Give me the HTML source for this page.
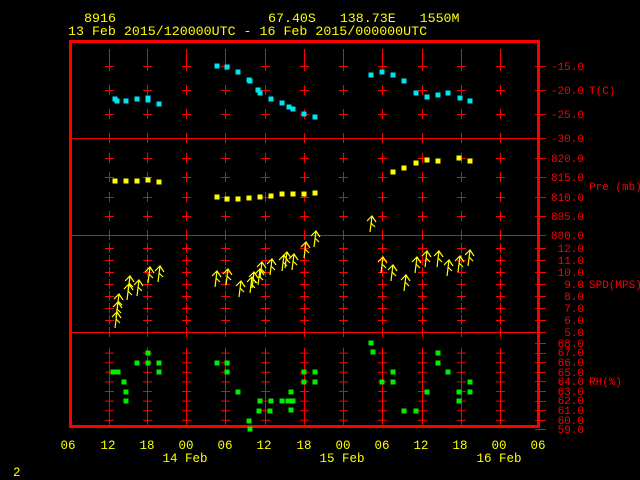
<!DOCTYPE html>
<html><head><meta charset="utf-8"><style>
html,body{margin:0;padding:0;background:#000;width:640px;height:480px;overflow:hidden}
svg{display:block}
text{font-family:"Liberation Mono",monospace;white-space:pre}
</style></head><body>
<svg id="s" width="640" height="480" xmlns="http://www.w3.org/2000/svg" xml:space="preserve">
<g fill="#ffff00" font-size="13.3">
<text x="84" y="22">8916</text>
<text x="268" y="22">67.40S   138.73E   1550M</text>
<text x="68" y="35">13 Feb 2015/120000UTC - 16 Feb 2015/000000UTC</text>
</g>
<g id="grid" stroke="#ff0000" stroke-width="1" fill="none"></g>
<rect x="70.5" y="41.5" width="468" height="385" fill="none" stroke="#ff0000" stroke-width="3"/>
<g fill="#ff0000" font-size="11" text-anchor="end">
<text x="584" y="70">-15.0</text><text x="584" y="94">-20.0</text><text x="584" y="118">-25.0</text><text x="584" y="142">-30.0</text>
<text x="584" y="162">820.0</text><text x="584" y="181">815.0</text><text x="584" y="201">810.0</text><text x="584" y="220">805.0</text><text x="584" y="239">800.0</text>
<text x="584" y="252">12.0</text><text x="584" y="264">11.0</text><text x="584" y="276">10.0</text><text x="584" y="288">9.0</text><text x="584" y="300">8.0</text><text x="584" y="312">7.0</text><text x="584" y="324">6.0</text><text x="584" y="336">5.0</text>
<text x="584" y="347">68.0</text><text x="584" y="356">67.0</text><text x="584" y="366">66.0</text><text x="584" y="376">65.0</text><text x="584" y="385">64.0</text><text x="584" y="395">63.0</text><text x="584" y="404">62.0</text><text x="584" y="414">61.0</text><text x="584" y="424">60.0</text><text x="584" y="433">59.0</text>
</g>
<g fill="#ff0000" font-size="11">
<text x="589" y="94">T(C)</text><text x="589" y="190">Pre (mb)</text><text x="589" y="288">SPD(MPS)</text><text x="589" y="385">RH(%)</text>
</g>
<g fill="#ffff00" font-size="12.5" text-anchor="middle">
<text x="68" y="449">06</text><text x="108" y="449">12</text><text x="147" y="449">18</text><text x="186" y="449">00</text><text x="225" y="449">06</text><text x="264" y="449">12</text><text x="304" y="449">18</text><text x="343" y="449">00</text><text x="382" y="449">06</text><text x="421" y="449">12</text><text x="460" y="449">18</text><text x="499" y="449">00</text><text x="538" y="449">06</text>
<text x="185" y="462">14 Feb</text><text x="342" y="462">15 Feb</text><text x="499" y="462">16 Feb</text>
</g>
<text x="13" y="476" fill="#ffff00" font-size="12.5">2</text>
<g id="data"></g>
</svg>
<script>
var NS="http://www.w3.org/2000/svg";
function el(p,t,a){var e=document.createElementNS(NS,t);for(var k in a)e.setAttribute(k,a[k]);p.appendChild(e);return e;}
var g=document.getElementById('grid'),d=document.getElementById('data');
var xs=[109,147,186,225,265,304,343,382,422,461,500];
var ty=[66,90,114,158,177,197,216,248,260,272,284,296,308,320];
for(var i=0;i<8;i++)ty.push(352.6+i*9.6);
var p="";
[138.5,235.5,332.5].forEach(function(y){p+="M70 "+y+"H545";});
xs.forEach(function(x){var X=x+0.5;p+="M"+X+" 49V61";
 ty.concat([138,235,332]).forEach(function(y){p+="M"+X+" "+(y-5)+"V"+(y+5)+"M"+(x-4)+" "+(y+0.5)+"H"+(x+5);});
});
var ry=[66,90,114,138,158,177,197,216,235,248,260,272,284,296,308,320,332];
for(var i=0;i<10;i++)ry.push(343+i*9.6);
ry.forEach(function(y){p+="M535 "+(Math.round(y)+0.5)+"H546";});
el(g,'path',{d:p});
function sq(list,c){list.forEach(function(q){el(d,'rect',{x:q[0]-2.5,y:q[1]-2.5,width:5,height:5,fill:c});});}
sq([[115,99],[117,101],[126,101],[137,99],[148,98],[148,100],[159,104],[217,66],[227,67],[238,72],[249,80],[250,81],[258,90],[260,93],[271,99],[282,103],[289,107],[293,109],[304,114],[315,117],[371,75],[382,72],[393,75],[404,81],[416,93],[427,97],[438,95],[448,93],[460,98],[470,101]],'#00e5ee');
sq([[115,181],[126,181],[137,181],[148,180],[159,182],[217,197],[227,199],[238,199],[249,198],[260,197],[271,196],[282,194],[293,194],[304,194],[315,193],[393,172],[404,168],[416,163],[427,160],[438,161],[459,158],[470,161]],'#ffff00');
sq([[113,372],[118,372],[124,382],[126,392],[126,401],[137,363],[148,353],[148,363],[159,363],[159,372],[217,363],[227,363],[227,372],[238,392],[249,421],[250,429],[259,411],[260,401],[270,411],[271,401],[282,401],[288,401],[291,392],[291,410],[293,401],[304,382],[304,372],[315,372],[315,382],[371,343],[373,352],[382,382],[393,372],[393,382],[404,411],[416,411],[427,392],[438,353],[438,363],[448,372],[459,392],[459,401],[470,382],[470,392]],'#00ee00');
var w=[[115,328],[116,318],[117,310],[127,300],[128,292],[137,296],[148,283],[158,282],[215,287],[226,285],[239,297],[250,293],[252,288],[258,285],[260,278],[270,275],[282,271],[285,268],[292,270],[304,258],[314,247],[370,232],[381,273],[391,281],[404,291],[415,273],[425,267],[437,267],[447,276],[458,272],[468,266]];
w.forEach(function(q){var x=q[0],y=q[1];
 el(d,'path',{d:"M"+x+" "+y+"L"+(x+2)+" "+(y-16)+"M"+(x-3)+" "+(y-11)+"L"+(x+2)+" "+(y-16)+"L"+(x+6)+" "+(y-10)+"M"+(x+1)+" "+(y-9)+"L"+(x+5)+" "+(y-5),stroke:"#ffff00","stroke-width":1.2,fill:"none"});});
</script>
</body></html>
